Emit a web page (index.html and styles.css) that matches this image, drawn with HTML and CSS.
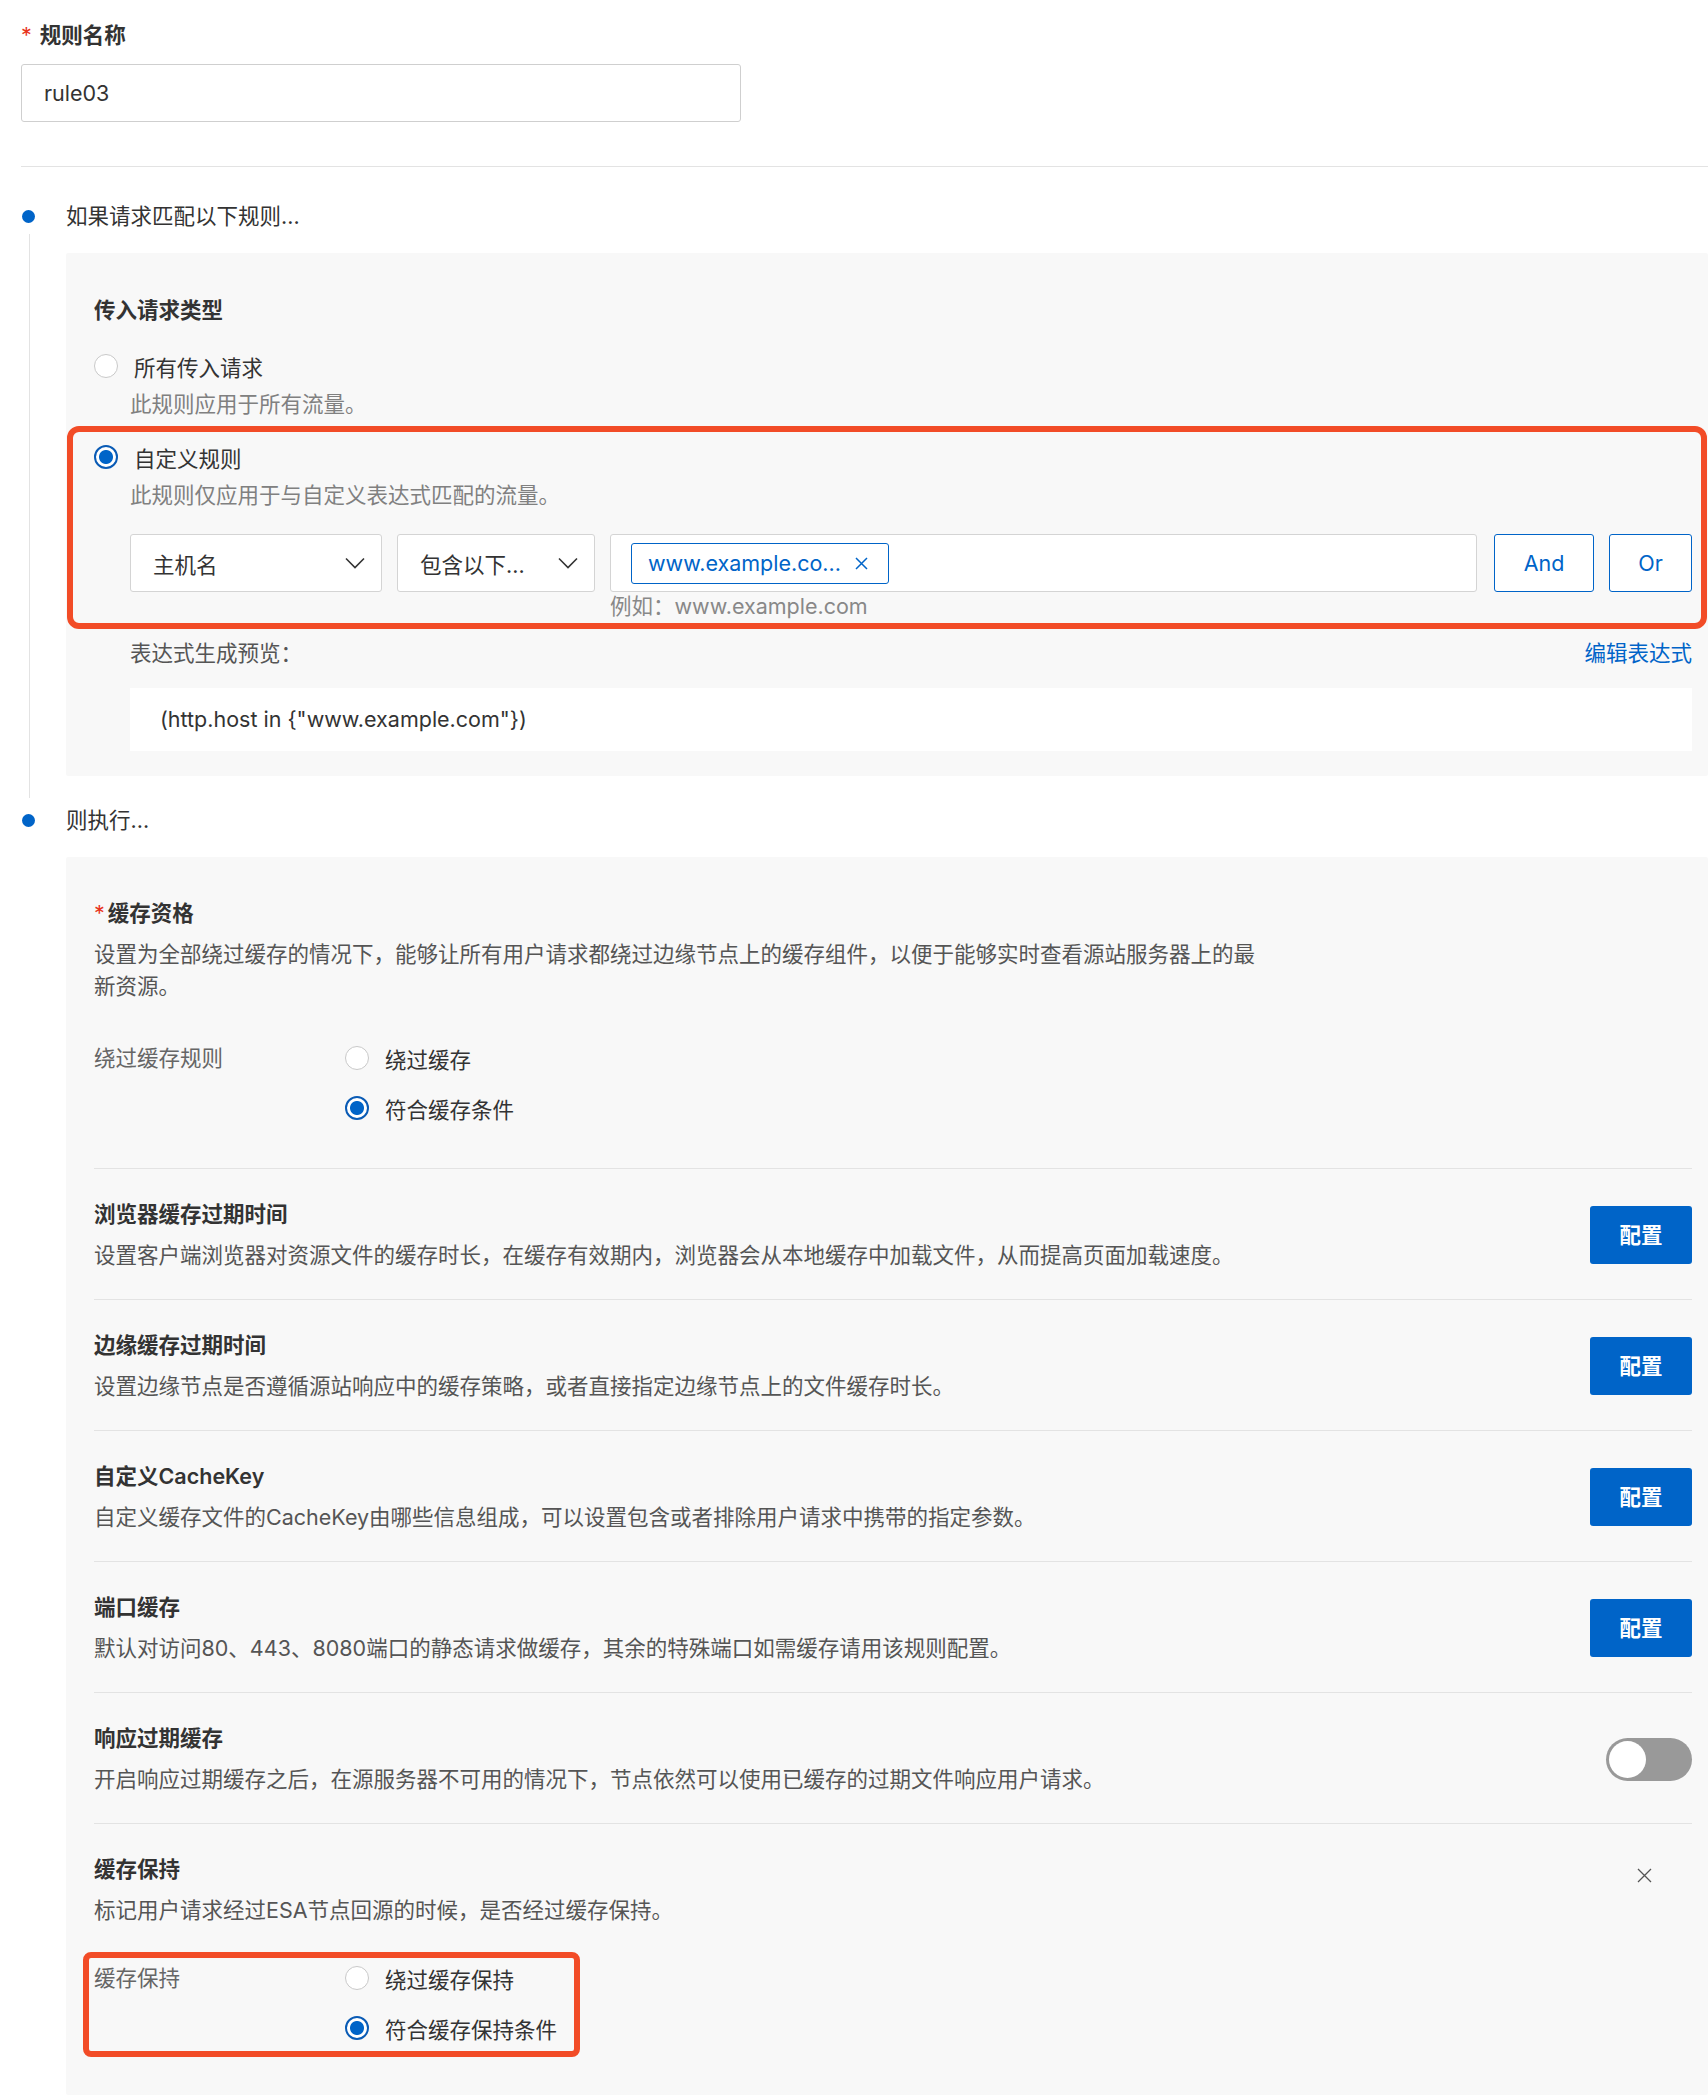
FILE: index.html
```html
<!DOCTYPE html>
<html lang="zh-CN">
<head>
    <meta charset="UTF-8">
    <title>规则配置</title>
    <link rel="stylesheet" href="styles.css">
</head>
<body>
<div class="page">

    <!-- Rule name -->
    <div class="label"><span class="req">*</span>规则名称</div>
    <div class="text-input">rule03</div>

    <div class="divider"></div>

    <!-- Step 1: match -->
    <div class="step step-match">
        <div class="step-dot"></div>
        <div class="step-title">如果请求匹配以下规则...</div>
        <div class="step-line"></div>
        <div class="panel panel-match">
            <div class="group-title">传入请求类型</div>

            <div class="radio-option first">
                <span class="radio"></span>
                <span>所有传入请求</span>
            </div>
            <div class="hint">此规则应用于所有流量。</div>

            <div class="mark mark-wide">
                <div class="radio-option">
                    <span class="radio checked"></span>
                    <span>自定义规则</span>
                </div>
                <div class="hint">此规则仅应用于与自定义表达式匹配的流量。</div>

                <div class="cond-row">
                    <div class="select select-field">
                        <span>主机名</span>
                        <svg width="20" height="12" viewBox="0 0 20 12"><polyline points="1,1.5 10,10.5 19,1.5" fill="none" stroke="#333" stroke-width="1.6"/></svg>
                    </div>
                    <div class="select select-op">
                        <span>包含以下...</span>
                        <svg width="20" height="12" viewBox="0 0 20 12"><polyline points="1,1.5 10,10.5 19,1.5" fill="none" stroke="#333" stroke-width="1.6"/></svg>
                    </div>
                    <div class="tag-input">
                        <div class="tag">
                            <span>www.example.co...</span>
                            <svg width="13" height="13" viewBox="0 0 13 13"><path d="M1 1 L12 12 M12 1 L1 12" stroke="#0064c8" stroke-width="1.5"/></svg>
                        </div>
                    </div>
                    <div class="btn-outline btn-and">And</div>
                    <div class="btn-outline btn-or">Or</div>
                </div>
                <div class="example">例如：www.example.com</div>
            </div>

            <div class="preview-head">
                <span>表达式生成预览：</span>
                <span class="link">编辑表达式</span>
            </div>
            <div class="preview-box">(http.host in {"www.example.com"})</div>
        </div>
    </div>

    <!-- Step 2: action -->
    <div class="step">
        <div class="step-dot"></div>
        <div class="step-title">则执行...</div>
        <div></div>
        <div class="panel panel-action">
            <div class="group-title"><span class="req tight">*</span>缓存资格</div>
            <div class="desc desc-wrap">设置为全部绕过缓存的情况下，能够让所有用户请求都绕过边缘节点上的缓存组件，以便于能够实时查看源站服务器上的最新资源。</div>

            <div class="field-row bypass">
                <div class="field-label">绕过缓存规则</div>
                <div class="radio-list">
                    <div class="radio-option"><span class="radio"></span><span>绕过缓存</span></div>
                    <div class="radio-option"><span class="radio checked"></span><span>符合缓存条件</span></div>
                </div>
            </div>

            <div class="setting-row">
                <div class="setting-main">
                    <div class="group-title">浏览器缓存过期时间</div>
                    <div class="desc">设置客户端浏览器对资源文件的缓存时长，在缓存有效期内，浏览器会从本地缓存中加载文件，从而提高页面加载速度。</div>
                </div>
                <div class="setting-side"><div class="btn-primary">配置</div></div>
            </div>

            <div class="setting-row">
                <div class="setting-main">
                    <div class="group-title">边缘缓存过期时间</div>
                    <div class="desc">设置边缘节点是否遵循源站响应中的缓存策略，或者直接指定边缘节点上的文件缓存时长。</div>
                </div>
                <div class="setting-side"><div class="btn-primary">配置</div></div>
            </div>

            <div class="setting-row">
                <div class="setting-main">
                    <div class="group-title">自定义CacheKey</div>
                    <div class="desc">自定义缓存文件的CacheKey由哪些信息组成，可以设置包含或者排除用户请求中携带的指定参数。</div>
                </div>
                <div class="setting-side"><div class="btn-primary">配置</div></div>
            </div>

            <div class="setting-row">
                <div class="setting-main">
                    <div class="group-title">端口缓存</div>
                    <div class="desc">默认对访问80、443、8080端口的静态请求做缓存，其余的特殊端口如需缓存请用该规则配置。</div>
                </div>
                <div class="setting-side"><div class="btn-primary">配置</div></div>
            </div>

            <div class="setting-row">
                <div class="setting-main">
                    <div class="group-title">响应过期缓存</div>
                    <div class="desc">开启响应过期缓存之后，在源服务器不可用的情况下，节点依然可以使用已缓存的过期文件响应用户请求。</div>
                </div>
                <div class="setting-side"><div class="switch"><span class="knob"></span></div></div>
            </div>

            <div class="setting-row last">
                <div class="setting-main">
                    <div class="group-title">缓存保持</div>
                    <div class="desc">标记用户请求经过ESA节点回源的时候，是否经过缓存保持。</div>
                    <div class="mark mark-small">
                        <div class="field-row">
                            <div class="field-label">缓存保持</div>
                            <div class="radio-list">
                                <div class="radio-option"><span class="radio"></span><span>绕过缓存保持</span></div>
                                <div class="radio-option"><span class="radio checked"></span><span>符合缓存保持条件</span></div>
                            </div>
                        </div>
                    </div>
                </div>
                <div class="setting-side top">
                    <svg class="close" width="15" height="15" viewBox="0 0 15 15"><path d="M1 1 L14 14 M14 1 L1 14" stroke="#555" stroke-width="1.3"/></svg>
                </div>
            </div>
        </div>
    </div>

</div>
</body>
</html>
```

FILE: styles.css
```css
* {
    box-sizing: border-box;
}
body {
    margin: 0;
    background-color: #fff;
    font-family: Inter, "Noto Sans CJK SC", sans-serif;
    font-size: 21.5px;
    color: #333;
}
.page {
    margin-left: 21px;
    padding-top: 20px;
}
.label {
    line-height: 30px;
    font-weight: 600;
}
.req {
    color: #e8341c;
    margin-right: 8px;
    font-weight: 400;
}
.req.tight {
    margin-right: 3px;
}
.text-input {
    width: 720px;
    height: 58px;
    margin-top: 14px;
    padding-left: 22px;
    line-height: 56px;
    border: 1px solid #cfcfcf;
    border-radius: 3px;
    background-color: #fff;
}
.divider {
    height: 1px;
    margin-top: 44px;
    background-color: #e3e3e3;
}

/* timeline steps */
.step {
    display: grid;
    grid-template-columns: 45px 1fr;
    align-items: center;
}
.step-match {
    margin-top: 34px;
}
.step-dot {
    width: 13px;
    height: 13px;
    margin-left: 1px;
    border-radius: 50%;
    background-color: #0064c8;
}
.step-title {
    line-height: 30px;
}
.step-line {
    align-self: stretch;
    width: 1px;
    margin: 3px 0 7px 8px;
    background-color: #e3e3e3;
}
.panel {
    align-self: start;
    margin-top: 22px;
    background-color: #f8f8f8;
    border-radius: 2px;
}
.panel-match {
    margin-bottom: 29px;
    padding: 42px 16px 25px 28px;
}
.panel-action {
    padding: 41px 16px 38px 28px;
}
.group-title {
    line-height: 30px;
    font-weight: 600;
}

/* radios */
.radio-option {
    display: flex;
    align-items: center;
    height: 30px;
}
.radio-option.first {
    margin-top: 26px;
}
.radio {
    width: 24px;
    height: 24px;
    margin-right: 16px;
    border: 1px solid #c9c9c9;
    border-radius: 50%;
    background-color: #fff;
    flex-shrink: 0;
}
.radio.checked {
    border: 2px solid #0a5bb5;
    background: radial-gradient(circle, #0064c8 6.5px, #fff 7.5px);
}
.hint {
    margin-top: 8px;
    padding-left: 36px;
    line-height: 30px;
    color: #808080;
}

/* red annotation frames */
.mark {
    border: 6px solid #f24c27;
    border-radius: 12px;
}
.mark-wide {
    margin: 7px -15px 0 -27px;
    padding: 10px 9px 3px 21px;
}
.mark-small {
    display: inline-block;
    margin: 26px 0 0 -11px;
    padding: 5px 17px 8px 5px;
    border-radius: 8px;
}

/* condition builder */
.cond-row {
    display: flex;
    gap: 15px;
    margin-top: 24px;
    padding-left: 36px;
    height: 58px;
}
.select {
    display: flex;
    align-items: center;
    justify-content: space-between;
    padding: 0 16px 0 22px;
    border: 1px solid #d4d4d4;
    border-radius: 3px;
    background-color: #fff;
}
.select-field {
    width: 252px;
}
.select-op {
    width: 198px;
}
.tag-input {
    flex: 1;
    display: flex;
    align-items: center;
    padding-left: 20px;
    border: 1px solid #d4d4d4;
    border-radius: 3px;
    background-color: #fff;
}
.tag {
    display: flex;
    align-items: center;
    justify-content: space-between;
    width: 258px;
    height: 41px;
    padding: 0 20px 0 16px;
    border: 1px solid #0064c8;
    border-radius: 3px;
    color: #0064c8;
}
.btn-outline {
    display: flex;
    align-items: center;
    justify-content: center;
    border: 1px solid #0064c8;
    border-radius: 3px;
    background-color: #fff;
    color: #0064c8;
}
.btn-and {
    width: 100px;
    margin-left: 2px;
}
.btn-or {
    width: 83px;
}
.example {
    padding-left: 516px;
    line-height: 28px;
    color: #888;
}
.preview-head {
    display: flex;
    justify-content: space-between;
    margin-top: 9px;
    padding-left: 36px;
    line-height: 30px;
    color: #555;
}
.link {
    color: #0064c8;
}
.preview-box {
    height: 63px;
    margin: 20px 0 0 36px;
    padding-left: 30px;
    line-height: 63px;
    background-color: #fff;
}

/* action settings */
.desc {
    margin-top: 10px;
    line-height: 32px;
    color: #555;
}
.desc-wrap {
    max-width: 1175px;
}
.field-row {
    display: flex;
}
.field-row.bypass {
    margin-top: 41px;
    padding-bottom: 45px;
}
.field-label {
    width: 251px;
    line-height: 30px;
    color: #666;
}
.radio-list {
    display: flex;
    flex-direction: column;
    gap: 20px;
}
.setting-row {
    display: flex;
    align-items: center;
    padding: 30px 0 28px;
    border-top: 1px solid #e3e3e3;
}
.setting-row.last {
    align-items: flex-start;
    padding-bottom: 0;
}
.setting-main {
    flex: 1;
}
.setting-side {
    display: flex;
    justify-content: flex-end;
    width: 102px;
}
.setting-side.top {
    justify-content: flex-start;
    padding: 14px 0 0 47px;
}
.btn-primary {
    width: 102px;
    height: 58px;
    line-height: 58px;
    text-align: center;
    border-radius: 3px;
    background-color: #0064c8;
    color: #fff;
    font-weight: 600;
}
.switch {
    display: flex;
    align-items: center;
    width: 86px;
    height: 43px;
    padding-left: 3px;
    border-radius: 22px;
    background-color: #999;
}
.knob {
    width: 37px;
    height: 37px;
    border-radius: 50%;
    background-color: #fff;
}
```
